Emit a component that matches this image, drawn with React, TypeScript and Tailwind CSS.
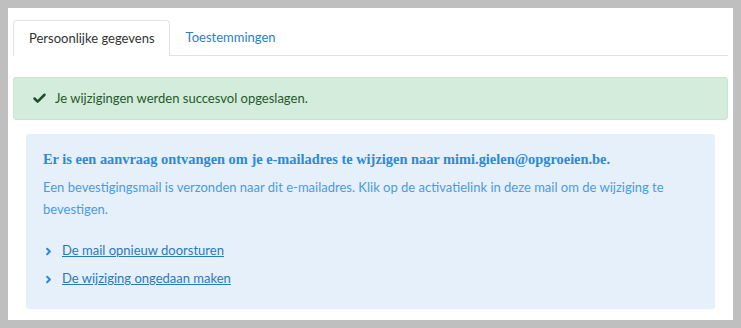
import { Check, ChevronRight } from "lucide-react";

const sans = "font-['Lato','Liberation_Sans',sans-serif]";
const serif = "font-['Liberation_Serif','DejaVu_Serif',serif]";

const Tabs = () => (
  <div className="flex border-b border-[#e2e2e2] h-[36px]">
    <div className="h-[36px] pl-[15px] pr-[14px] flex items-center border border-b-0 border-[#e2e2e2] rounded-t bg-white text-[13px] text-[#333]">
      Persoonlijke gegevens
    </div>
    <div className="h-[35px] pl-[16px] flex items-center text-[13px] text-[#2a80c7]">
      Toestemmingen
    </div>
  </div>
);

const Links = ["De mail opnieuw doorsturen", "De wijziging ongedaan maken"];

export default function App() {
  return (
    <div className={`w-[741px] h-[328px] bg-[#bfbfbf] p-[8px] ${sans}`}>
      <div className="w-[725px] h-[312px] bg-white pt-[12px] px-[5px]">
        <Tabs />
        <div className="mt-[21px] h-[43px] bg-[#d4ecdb] border border-[#c9e5d1] rounded-[3px] flex items-center pl-[18px] gap-[8px] text-[13px] text-[#1f5a2c]">
          <Check size={15} strokeWidth={4} className="text-[#1e4d2b]" />
          <span>Je wijzigingen werden succesvol opgeslagen.</span>
        </div>
        <div className="mx-[13px] mt-[14px] h-[175px] bg-[#e6f0fa] rounded-[3px] pt-[14px] pl-[17px] pr-[17px]">
          <p className={`${serif} font-bold text-[14.4px] leading-[22px] text-[#2c89d6]`}>
            Er is een aanvraag ontvangen om je e-mailadres te wijzigen naar mimi.gielen@opgroeien.be.
          </p>
          <p className="mt-[6px] text-[13px] leading-[22px] text-[#4a9be0]">
            Een bevestigingsmail is verzonden naar dit e-mailadres. Klik op de activatielink in deze mail om de wijziging te bevestigen.
          </p>
          <ul className="mt-[20px] flex flex-col gap-[6px]">
            {Links.map((l) => (
              <li key={l} className="flex items-center h-[22px] text-[13px]">
                <ChevronRight size={11} strokeWidth={4.5} className="text-[#2a8ae0] mr-[8px]" />
                <a className="underline text-[#2a78bd]" href="#">
                  {l}
                </a>
              </li>
            ))}
          </ul>
        </div>
      </div>
    </div>
  );
}
